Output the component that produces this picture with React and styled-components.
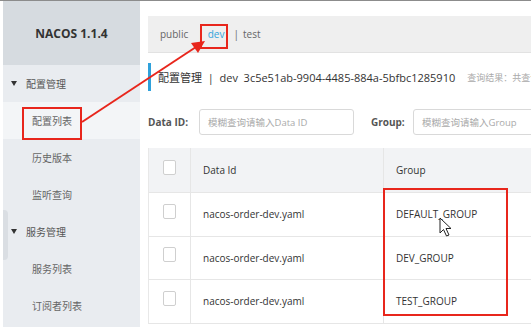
import React from "react";
import styled, { createGlobalStyle } from "styled-components";

const Global = createGlobalStyle`
  html, body { margin: 0; padding: 0; background: #fff; }
  body { font-family: "Open Sans", "Noto Sans CJK SC", sans-serif; width: 531px; height: 327px; overflow: hidden; }
  * { box-sizing: border-box; }
`;

const Page = styled.div`
  position: relative;
  width: 531px;
  height: 327px;
  border-top: 1px solid #8c8c8c;
  display: flex;
  overflow: hidden;
`;

const Sidebar = styled.aside`
  width: 137px;
  margin-left: 3px;
  background: #e9ecf0;
  display: flex;
  flex-direction: column;
  position: relative;
`;

const Brand = styled.div`
  height: 64px;
  background: #d6dbe0;
  display: flex;
  align-items: center;
  justify-content: center;
  font-weight: 700;
  font-size: 12px;
  color: #333;
`;

const MenuHead = styled.div`
  height: 37px;
  display: flex;
  align-items: center;
  padding-left: 8px;
  font-size: 10px;
  color: #555;
  &::before {
    content: "";
    width: 0;
    height: 0;
    border-left: 3.5px solid transparent;
    border-right: 3.5px solid transparent;
    border-top: 5px solid #333;
    margin-right: 9px;
  }
`;

const MenuItem = styled.div`
  height: 37px;
  display: flex;
  align-items: center;
  padding-left: 29px;
  font-size: 10px;
  color: #666;
  background: ${(p) => (p.$active ? "#f3f5f7" : "transparent")};
`;

const Toggle = styled.div`
  position: absolute;
  left: 0;
  top: 209px;
  width: 5px;
  height: 50px;
  background: #dadee3;
  border-radius: 0 4px 4px 0;
`;

const Main = styled.main`
  flex: 1;
  padding: 15px 0 0 8px;
  display: flex;
  flex-direction: column;
  min-width: 0;
`;

const NsBar = styled.div`
  height: 37px;
  background: #efefef;
  border-bottom: 1px solid #e2e2e2;
  display: flex;
  align-items: center;
  padding-left: 12px;
  font-size: 10px;
  color: #666;
  white-space: nowrap;
`;

const Ns = styled.span`
  color: ${(p) => (p.$active ? "#33a3dc" : "#666")};
`;

const Sep = styled.span`
  margin: 0 ${(p) => p.$after || 3}px 0 ${(p) => p.$gap || 4}px;
  color: #666;
`;

const Title = styled.div`
  margin-top: 10px;
  height: 28px;
  border-left: 3px solid #2fa1db;
  display: flex;
  align-items: center;
  padding-left: 7px;
  font-size: 11px;
  color: #333;
  white-space: nowrap;
`;

const Hint = styled.span`
  font-size: 9px;
  color: #aaa;
  margin-left: 12px;
`;

const Form = styled.div`
  margin-top: 18px;
  display: flex;
  align-items: center;
  height: 26px;
  white-space: nowrap;
`;

const Label = styled.span`
  display: inline-block;
  flex-shrink: 0;
  font-size: 10px;
  font-weight: 700;
  color: #555;
  width: ${(p) => p.$w}px;
`;

const Input = styled.div`
  height: 26px;
  width: ${(p) => p.$w}px;
  flex-shrink: 0;
  border: 1px solid #d9d9d9;
  border-radius: 3px;
  display: flex;
  align-items: center;
  padding-left: 8px;
  font-size: 9.5px;
  color: #aaa;
  margin-right: ${(p) => p.$mr || 0}px;
`;

const Table = styled.div`
  margin-top: 13px;
  width: 420px;
  border-left: 1px solid #e8e8e8;
  border-bottom: 1px solid #e6e6e6;
`;

const Row = styled.div`
  display: grid;
  grid-template-columns: 41px 193px 1fr;
  height: ${(p) => (p.$head ? 44 : 43.5)}px;
  background: ${(p) => (p.$head ? "#f2f3f5" : "#fff")};
  border-top: ${(p) => (p.$head ? "none" : "1px solid #e6e6e6")};
`;

const Cell = styled.div`
  display: flex;
  align-items: center;
  font-size: 10px;
  color: #333;
  border-left: ${(p) => (p.$first ? "none" : "1px solid #e6e6e6")};
  justify-content: ${(p) => (p.$first ? "center" : "flex-start")};
  padding: ${(p) => (p.$first ? "0 0 6px 0" : "0 0 0 12px")};
`;

const Check = styled.span`
  width: 13px;
  height: 15px;
  border: 1px solid #cfcfcf;
  border-radius: 2px;
  background: #fff;
`;

const Mark = styled.div`
  position: absolute;
  left: ${(p) => p.$x}px;
  top: ${(p) => p.$y}px;
  width: ${(p) => p.$w}px;
  height: ${(p) => p.$h}px;
  border: 2px solid #e8261c;
  pointer-events: none;
`;

const Overlay = styled.svg`
  position: absolute;
  left: 0;
  top: 0;
  pointer-events: none;
`;

const rows = [
  ["nacos-order-dev.yaml", "DEFAULT_GROUP"],
  ["nacos-order-dev.yaml", "DEV_GROUP"],
  ["nacos-order-dev.yaml", "TEST_GROUP"],
];

export default function App() {
  return (
    <>
      <Global />
      <Page>
        <Sidebar>
          <Brand>NACOS 1.1.4</Brand>
          <MenuHead>配置管理</MenuHead>
          <MenuItem $active>配置列表</MenuItem>
          <MenuItem>历史版本</MenuItem>
          <MenuItem>监听查询</MenuItem>
          <MenuHead>服务管理</MenuHead>
          <MenuItem>服务列表</MenuItem>
          <MenuItem>订阅者列表</MenuItem>
          <Toggle />
        </Sidebar>
        <Main>
          <NsBar>
            <Ns>public</Ns>
            <Sep $gap={10} $after={4}>|</Sep>
            <Ns $active>dev</Ns>
            <Sep $gap={9} $after={4}>|</Sep>
            <Ns>test</Ns>
          </NsBar>
          <Title>
            配置管理&nbsp; | &nbsp;dev&nbsp; 3c5e51ab-9904-4485-884a-5bfbc1285910
            <Hint>查询结果：共查询到 3 条满足要求的配置。</Hint>
          </Title>
          <Form>
            <Label $w={51}>Data ID:</Label>
            <Input $w={155} $mr={17}>模糊查询请输入Data ID</Input>
            <Label $w={42}>Group:</Label>
            <Input $w={160}>模糊查询请输入Group</Input>
          </Form>
          <Table>
            <Row $head>
              <Cell $first>
                <Check />
              </Cell>
              <Cell>Data Id</Cell>
              <Cell>Group</Cell>
            </Row>
            {rows.map(([id, g], i) => (
              <Row key={i}>
                <Cell $first>
                  <Check />
                </Cell>
                <Cell>{id}</Cell>
                <Cell>{g}</Cell>
              </Row>
            ))}
          </Table>
        </Main>
        <Mark $x={22} $y={106} $w={60} $h={33} />
        <Mark $x={200} $y={23} $w={28} $h={25} />
        <Mark $x={383} $y={187} $w={125} $h={128} />
        <Overlay width="531" height="327">
          <line x1="82" y1="121" x2="196" y2="46" stroke="#e8261c" strokeWidth="2" />
          <polygon points="205,40 191,42 198,52" fill="#e8261c" />
          <path
            d="M440 217 L440 232 L443.5 228.5 L446.5 235 L449 234 L446 227.5 L451 227.5 Z"
            fill="#fff"
            stroke="#222"
            strokeWidth="1"
            strokeLinejoin="round"
          />
        </Overlay>
      </Page>
    </>
  );
}
